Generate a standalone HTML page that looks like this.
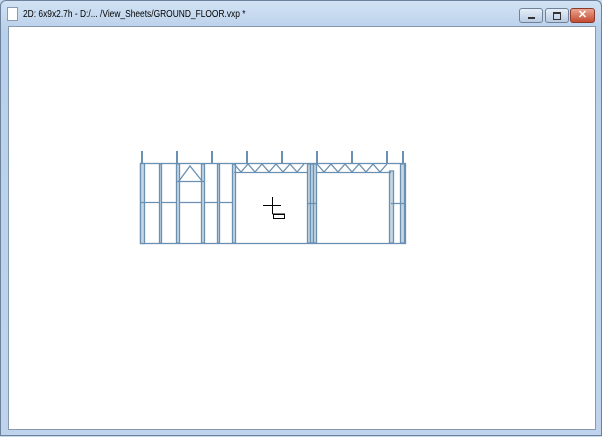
<!DOCTYPE html>
<html><head><style>
body{margin:0;width:602px;height:436px;overflow:hidden;background:#c5d9ef;font-family:"Liberation Sans",sans-serif}
.win{position:absolute;left:0;top:0;width:602px;height:436px;background:linear-gradient(#d2e2f4,#b9d0ea 30px,#bfd4ec);box-sizing:border-box;border:1px solid #6b819c;border-radius:6px 6px 0 0}
.title{position:absolute;left:22px;top:7px;font-size:10.5px;color:#000;transform:scaleX(0.8);transform-origin:0 0;white-space:nowrap}
.ico{position:absolute;left:6px;top:6px;width:9px;height:12px;background:#fff;border:1px solid #8a9ab0}
.client{position:absolute;left:7px;top:25px;width:588px;height:404px;background:#fff;border:1px solid #8799ad;box-sizing:border-box}
.btn{position:absolute;top:7px;height:15px;width:24px;border:1px solid #6f8299;border-radius:3px;box-sizing:border-box;background:linear-gradient(#e6eef8,#b9cbe2)}
.cls{background:linear-gradient(#e9a591,#c44a30);border-color:#8b3a2a;width:25px}
</style></head><body>
<div class="win">
<div class="ico"></div>
<div class="title">2D: 6x9x2.7h - D:/... /View_Sheets/GROUND_FLOOR.vxp *</div>
<div class="btn" style="left:518px"><div style="position:absolute;left:8px;top:8px;width:7px;height:2px;background:#333"></div></div>
<div class="btn" style="left:544px"><div style="position:absolute;left:7px;top:3px;width:6px;height:5px;border:1px solid #333;border-top-width:2px"></div></div>
<div class="btn cls" style="left:569px;color:#fff;font-size:11px;font-weight:bold;text-align:center;line-height:13px">✕</div>
<div class="client"></div>
<svg style="position:absolute;left:0;top:0" width="602" height="436" stroke="#6a90b2" stroke-width="1.3" fill="none">
<rect x="139.5" y="162.5" width="265" height="80"/>
<rect x="139.5" y="162.5" width="4" height="80" fill="#c6d6e4"/>
<line x1="139" y1="201.5" x2="233" y2="201.5"/>
<g fill="#c6d6e4">
<rect x="158.5" y="163" width="2" height="79"/>
<rect x="175.5" y="163" width="3" height="79"/>
<rect x="200.5" y="163" width="3" height="79"/>
<rect x="216.5" y="163" width="2" height="79"/>
<rect x="231.5" y="163" width="3" height="79"/>
<rect x="306.5" y="163" width="3" height="79"/>
<rect x="309.5" y="163" width="3" height="79"/>
<rect x="312.5" y="163" width="3" height="79"/>
<rect x="388.5" y="170" width="4" height="72"/>
<rect x="399.5" y="163" width="4" height="79"/>
</g>
<path d="M175 180.5H203M178 180L189 165L201 180"/>
<path d="M233 171.5H307M316 171.5H390M233 163L240 171L247 163L254 171L261 163L268 171L275 163L282 171L289 163L296 171L303 163M316 163L323 171L330 163L337 171L344 163L351 171L358 163L365 171L372 163L379 171L386 163"/>
<line x1="307" y1="202.5" x2="316" y2="202.5"/><line x1="390" y1="202.5" x2="404" y2="202.5"/>
<g stroke-width="2"><path d="M141 150V163M176 150V163M211 150V163M246 150V163M281 150V163M316 150V163M351 150V163M386 150V163M402 150V163"/></g>
<g stroke="#000" stroke-width="1"><path d="M262 204.5H280M271.5 196V213M271.5 213H284"/><rect x="272.5" y="213.5" width="11" height="4"/></g>
</svg>
</div>
</body></html>
